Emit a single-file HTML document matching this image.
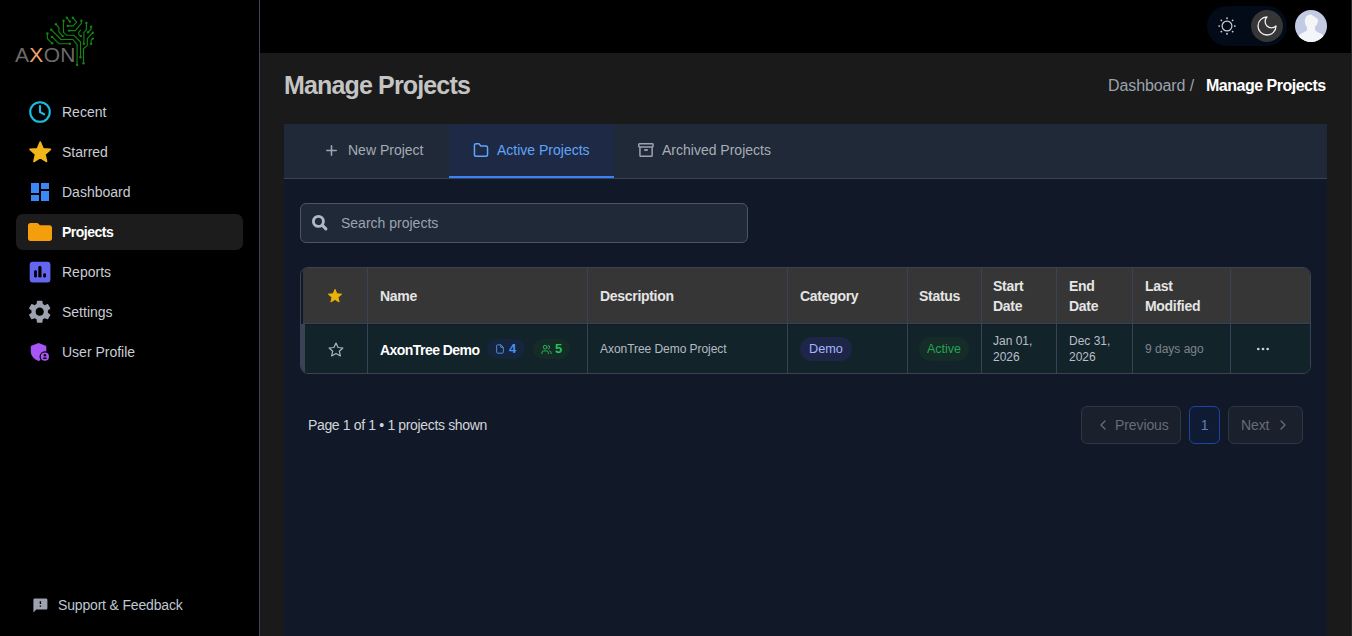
<!DOCTYPE html>
<html><head><meta charset="utf-8">
<style>
*{box-sizing:border-box;margin:0;padding:0}
html,body{width:1352px;height:636px;overflow:hidden;background:#1a1a1a;font-family:"Liberation Sans",sans-serif;}
.abs{position:absolute}
#sidebar{position:absolute;left:0;top:0;width:259px;height:636px;background:#000;}
#vline{position:absolute;left:259px;top:0;width:1px;height:636px;background:#3a4356}
#topbar{position:absolute;left:260px;top:0;width:1091px;height:53px;background:#000}
#hline{position:absolute;left:260px;top:53px;width:1091px;height:1px;background:#3a4356}
.nav{position:absolute;left:16px;width:227px;height:36px;border-radius:7px;}
.nav .lbl{position:absolute;left:46px;top:0;line-height:36px;font-size:14px;color:#c9cdd4;white-space:nowrap}
.nav svg{position:absolute}
#title{position:absolute;left:284px;top:70px;font-size:25px;font-weight:bold;color:#c4c4c4;letter-spacing:-0.85px;white-space:nowrap;line-height:30px}
#crumb{position:absolute;right:25px;top:74px;font-size:16px;line-height:22px;white-space:nowrap}
#card{position:absolute;left:284px;top:124px;width:1043px;height:512px;background:#111827}
#tabs{position:absolute;left:0;top:0;width:1043px;height:55px;background:#1f2937;border-bottom:1px solid #3a4356}
.tab{position:absolute;top:0;height:54px;font-size:14px;line-height:52px;white-space:nowrap;color:#a6abb4}
.vl{top:0;width:1px;height:105px;background:#3a4356}
.th{position:absolute;font-size:14px;line-height:20px;font-weight:bold;color:#e5e5e5;white-space:nowrap;letter-spacing:-0.3px}
.td{font-size:12px;line-height:16px;white-space:nowrap}
.pbtn{height:38px;border:1px solid #2e3544;border-radius:6px;background:#1a202c}
.ptxt{top:291px;font-size:14px;line-height:20px;color:#666d78;white-space:nowrap;letter-spacing:-0.1px}
</style></head>
<body>
<div id="sidebar">
  <!-- logo -->
  <div class="abs" style="left:15px;top:43px;font-size:21px;line-height:24px;color:#6b6b6b;letter-spacing:0.3px;white-space:nowrap">A<span style="color:#f4a36a">X</span>ON</div>
  <svg class="abs" style="left:44px;top:14px" width="54" height="54" viewBox="0 0 54 54" fill="none" stroke="#128512" stroke-width="1.15" stroke-linecap="round" stroke-linejoin="round">
    <path d="M33.1 50.9 V30.6 L28.9 25.5 H17 L7.2 15.7"/>
    <path d="M36.5 43.3 V28 L29.7 21.2 H22.5 L19.5 18.3 V6.8"/>
    <path d="M39.5 49.2 V34.8 L43.3 31.4 V24.6 L48.8 18.7"/>
    <path d="M39.9 29.7 V18.3 L42.4 15.7 V8.9"/>
    <path d="M3.4 19.5 V24.6 L8.1 29.3"/>
    <path d="M8.1 22.9 L14.9 29.7 H25.9"/>
    <path d="M11.9 10.2 L14.9 13.6 V17.8 L18.7 22.1"/>
    <path d="M22.9 3.8 L25.9 7.6"/>
    <path d="M28.9 3.8 L32.7 8.1 L29.3 11.9 H23.8"/>
    <path d="M37.4 6.8 V9.3 L31.4 16.6 H25"/>
    <path d="M36.5 16.1 L34.8 18.3 V20.8 L36.9 22.1"/>
    <path d="M47.1 12.7 V15 L44.1 18.3"/>
    <path d="M48.8 24.6 L47.1 26.3 V29.7"/>
    <g fill="#128512" stroke="none">
      <circle cx="33.1" cy="50.9" r="1.2"/><circle cx="7.2" cy="15.7" r="1.2"/><circle cx="36.5" cy="43.3" r="1.2"/><circle cx="19.5" cy="6.8" r="1.2"/>
      <circle cx="39.5" cy="49.2" r="1.2"/><circle cx="48.8" cy="18.7" r="1.2"/><circle cx="39.9" cy="29.7" r="1.2"/><circle cx="42.4" cy="8.9" r="1.2"/>
      <circle cx="3.4" cy="19.5" r="1.2"/><circle cx="8.1" cy="29.3" r="1.2"/><circle cx="8.1" cy="22.9" r="1.2"/><circle cx="25.9" cy="29.7" r="1.2"/>
      <circle cx="11.9" cy="10.2" r="1.2"/><circle cx="18.7" cy="22.1" r="1.2"/><circle cx="22.9" cy="3.8" r="1.2"/><circle cx="25.9" cy="7.6" r="1.2"/>
      <circle cx="28.9" cy="3.8" r="1.2"/><circle cx="23.8" cy="11.9" r="1.2"/><circle cx="37.4" cy="6.8" r="1.2"/><circle cx="25" cy="16.6" r="1.2"/>
      <circle cx="36.9" cy="22.1" r="1.2"/><circle cx="47.1" cy="12.7" r="1.2"/><circle cx="44.1" cy="18.3" r="1.2"/><circle cx="47.1" cy="29.7" r="1.2"/><circle cx="48.8" cy="24.6" r="1.2"/>
    </g>
  </svg>
  <!-- nav -->
  <div class="nav" style="top:94px">
    <svg style="left:13px;top:7px" width="22" height="22" viewBox="0 0 22 22" fill="none" stroke="#17bde2" stroke-width="2.1" stroke-linecap="round" stroke-linejoin="round"><circle cx="11" cy="11" r="9.8"/><path d="M11 5V11L15.2 13.3"/></svg>
    <div class="lbl">Recent</div>
  </div>
  <div class="nav" style="top:134px">
    <svg style="left:11.75px;top:6.1px" width="24.5" height="24.5" viewBox="0 0 24 24"><path fill="#f2b51a" stroke="#f2b51a" stroke-width="1.6" stroke-linejoin="round" d="M12 17.27L18.18 21l-1.64-7.03L22 9.24l-7.19-.61L12 2 9.19 8.63 2 9.24l5.46 4.73L5.82 21z"/></svg>
    <div class="lbl">Starred</div>
  </div>
  <div class="nav" style="top:174px">
    <svg style="left:15px;top:9px" width="18" height="18" viewBox="0 0 18 18" fill="#3b87f5"><rect x="0" y="0" width="8" height="10"/><rect x="0" y="12" width="8" height="6"/><rect x="10" y="0" width="8" height="6"/><rect x="10" y="8" width="8" height="10"/></svg>
    <div class="lbl">Dashboard</div>
  </div>
  <div class="nav" style="top:214px;background:#1c1c1c">
    <svg style="left:12px;top:9px" width="24" height="18" viewBox="2 4 20 16" preserveAspectRatio="none"><path fill="#f59e0b" d="M10 4H4c-1.1 0-2 .9-2 2v12c0 1.1.9 2 2 2h16c1.1 0 2-.9 2-2V8c0-1.1-.9-2-2-2h-8l-2-2z"/></svg>
    <div class="lbl" style="color:#fff;font-weight:bold;letter-spacing:-0.5px">Projects</div>
  </div>
  <div class="nav" style="top:254px">
    <svg style="left:13px;top:7px" width="22" height="22" viewBox="0 0 22 22"><rect x="0.7" y="0.7" width="20.7" height="20.7" rx="3" fill="#6466f0"/><g fill="#000"><rect x="5.1" y="9.3" width="2.8" height="7.3" rx="1.3"/><rect x="9.3" y="5.1" width="3.2" height="11.5" rx="1.4"/><rect x="14.2" y="12.2" width="2.8" height="4.4" rx="1.3"/></g></svg>
    <div class="lbl">Reports</div>
  </div>
  <div class="nav" style="top:294px">
    <svg style="left:9.9px;top:3.9px" width="27.4" height="27.4" viewBox="0 0 24 24"><path fill="#9ca3af" d="M19.14 12.94c.04-.3.06-.61.06-.94 0-.32-.02-.64-.07-.94l2.03-1.58c.18-.14.23-.41.12-.61l-1.92-3.32c-.12-.22-.37-.29-.59-.22l-2.39.96c-.5-.38-1.03-.7-1.62-.94l-.36-2.54c-.04-.24-.24-.41-.48-.41h-3.84c-.24 0-.43.17-.47.41l-.36 2.54c-.59.24-1.13.57-1.62.94l-2.39-.96c-.22-.08-.47 0-.59.22L2.74 8.87c-.12.21-.08.47.12.61l2.03 1.58c-.05.3-.09.63-.09.94s.02.64.07.94l-2.03 1.58c-.18.14-.23.41-.12.61l1.92 3.32c.12.22.37.29.59.22l2.39-.96c.5.38 1.030.7 1.620.94l.36 2.54c.05.24.24.41.48.41h3.84c.24 0 .44-.17.47-.41l.36-2.54c.59-.24 1.13-.56 1.62-.94l2.39.96c.22.08.47 0 .59-.22l1.92-3.32c.12-.22.07-.47-.12-.61l-2.01-1.58zM12 15.6c-1.98 0-3.6-1.62-3.6-3.6s1.62-3.6 3.6-3.6 3.6 1.62 3.6 3.6-1.62 3.6-3.6 3.6z"/></svg>
    <div class="lbl">Settings</div>
  </div>
  <div class="nav" style="top:334px">
    <svg style="left:13px;top:7px" width="22" height="22" viewBox="0 0 22 22"><path fill="#a855f7" d="M9.6 2.1L17.3 5V10.5C17.3 15 14 18.5 9.6 19.9C5.2 18.5 1.8 15 1.8 10.5V5Z"/><circle cx="15.9" cy="15.7" r="5.4" fill="#000"/><circle cx="15.9" cy="15.7" r="4.1" fill="#a855f7"/><circle cx="15.9" cy="14.3" r="1.25" fill="#000"/><rect x="14.1" y="16.6" width="3.6" height="1.3" rx=".6" fill="#000"/></svg>
    <div class="lbl">User Profile</div>
  </div>
  <!-- support -->
  <svg class="abs" style="left:31.9px;top:597.4px" width="16.8" height="16.8" viewBox="0 0 24 24"><path fill="#9ca3af" d="M20 2H4c-1.1 0-1.99.9-1.99 2L2 22l4-4h14c1.1 0 2-.9 2-2V4c0-1.1-.9-2-2-2zm-7 12h-2v-2h2v2zm0-4h-2V6h2v4z"/></svg>
  <div class="abs" style="left:58px;top:595px;font-size:14px;line-height:20px;color:#bfc7d2;white-space:nowrap;letter-spacing:-0.17px">Support &amp; Feedback</div>
</div>

<div id="vline"></div>
<div id="topbar">
  <div class="abs" style="left:947px;top:6px;width:80px;height:40px;border-radius:20px;background:#020b17"></div>
  <svg class="abs" style="left:955px;top:14px" width="24" height="24" viewBox="0 0 24 24" fill="none" stroke="#c9cdd6" stroke-width="1.2" stroke-linecap="round"><circle cx="12" cy="12" r="4.9"/><g stroke-width="1.7"><path d="M12 4.1v.2M12 19.7v.2M4.1 12h.2M19.7 12h.2M6.3 6.3l.1.1M17.6 17.6l.1.1M6.3 17.7l.1-.1M17.6 6.4l.1-.1"/></g></svg>
  <div class="abs" style="left:991px;top:10px;width:32px;height:32px;border-radius:16px;background:#363636"></div>
  <svg class="abs" style="left:995px;top:13.5px" width="24" height="24" viewBox="0 0 24 24" fill="none" stroke="#f2f2f2" stroke-width="1.3" stroke-linejoin="round"><path d="M12 3a6 6 0 0 0 9 9 9 9 0 1 1-9-9Z"/></svg>
  <div class="abs" style="left:1035px;top:10px;width:32px;height:32px;border-radius:16px;background:#c3cbe4;overflow:hidden">
    <svg width="32" height="32" viewBox="0 0 32 32"><path fill="#f4f5f8" d="M16 4.5C12.3 4.5 9.8 7 9.8 11.5c0 2.3.8 4.2 2.2 5.5v3c-.5 1.5-4 2.5-6.5 4C3.5 25.2 2.5 27 2 33h28c-.5-6-1.5-7.8-3.5-9-2.5-1.5-6-2.5-6.5-4v-3c1-1.5 1.4-1.3 2.2-3.2 2.2-5.5 0-4.5-2.5-7-6.2-7z"/></svg>
  </div>
</div>
<div id="title">Manage Projects</div>
<div class="abs" style="left:1108px;top:75px;font-size:16px;line-height:22px;color:#9ca3af;white-space:nowrap;letter-spacing:-0.1px">Dashboard /</div><div class="abs" style="left:1206px;top:75px;font-size:16px;line-height:22px;color:#fff;font-weight:bold;white-space:nowrap;letter-spacing:-0.5px">Manage Projects</div>
<div id="card">
  <div id="tabs">
    <svg class="abs" style="left:42px;top:20.5px" width="11" height="11" viewBox="0 0 11 11" stroke="#9ea4ae" stroke-width="1.6" stroke-linecap="round"><path d="M5.5 .8v9.4M.8 5.5h9.4"/></svg>
    <div class="tab" style="left:64px">New Project</div>
    <div class="abs" style="left:165px;top:0;width:165px;height:54px;background:#1e2a45;border-bottom:2px solid #3b82f6"></div>
    <svg class="abs" style="left:189px;top:18px" width="17" height="17" viewBox="0 0 17 17" fill="none" stroke="#60a5fa" stroke-width="1.5" stroke-linejoin="round"><path d="M1.45 3.3Q1.45 1.75 3 1.75H5.6Q6.2 1.75 6.6 2.3L7.4 3.6Q7.7 4.1 8.3 4.1H13Q14.55 4.1 14.55 5.65V12.7Q14.55 14.25 13 14.25H3Q1.45 14.25 1.45 12.7Z"/></svg>
    <div class="tab" style="left:213px;color:#60a5fa">Active Projects</div>
    <svg class="abs" style="left:353px;top:18px" width="18" height="17" viewBox="0 0 18 17" fill="none" stroke="#9ca3af" stroke-width="1.5" stroke-linejoin="round"><rect x="1.75" y="1.75" width="14.3" height="3.2" rx=".7"/><path d="M2.95 4.95V13.45Q2.95 14.25 3.75 14.25H14.35Q15.15 14.25 15.15 13.45V4.95"/><path d="M7.2 8H10.8" stroke-width="1.8"/></svg>
    <div class="tab" style="left:378px;color:#a8adb6">Archived Projects</div>
  </div>
  <!-- search -->
  <div class="abs" style="left:16px;top:79px;width:448px;height:40px;border:1px solid #4b5563;border-radius:6px;background:#1f2937"></div>
  <svg class="abs" style="left:25px;top:88px" width="22" height="22" viewBox="0 0 22 22" fill="none" stroke="#b3b9c2"><circle cx="9.4" cy="9.4" r="5" stroke-width="2.8"/><path d="M13.2 13.2L16.9 16.9" stroke-width="3.1" stroke-linecap="round"/></svg>
  <div class="abs" style="left:57px;top:89px;font-size:14px;line-height:20px;color:#9ca3af;white-space:nowrap">Search projects</div>
  <!-- table -->
  <div id="tbl" class="abs" style="left:16px;top:143px;width:1011px;height:107px;border:1px solid #3a4356;border-radius:8px;background:#111827;overflow:hidden">
    <div class="abs" style="left:2px;top:0;width:1007px;height:56px;background:#363636;border-bottom:1px solid #3a4356"></div>
    <div class="abs" style="left:0;top:56px;width:4px;height:49px;background:#3a4356"></div>
    <div class="abs" style="left:4px;top:57px;width:1005px;height:48px;background:#13232a"></div>
    <!-- col lines: abs x - 301 -->
    <div class="abs vl" style="left:66px"></div>
    <div class="abs vl" style="left:286px"></div>
    <div class="abs vl" style="left:486px"></div>
    <div class="abs vl" style="left:606px"></div>
    <div class="abs vl" style="left:680px"></div>
    <div class="abs vl" style="left:755px"></div>
    <div class="abs vl" style="left:831px"></div>
    <div class="abs vl" style="left:929px"></div>
    <!-- header -->
    <svg class="abs" style="left:26px;top:20px" width="16" height="16" viewBox="0 0 24 24"><path fill="#eab308" stroke="#eab308" stroke-width="1.4" stroke-linejoin="round" d="M12 17.27L18.18 21l-1.64-7.03L22 9.24l-7.19-.61L12 2 9.19 8.63 2 9.24l5.46 4.73L5.82 21z"/></svg>
    <div class="th" style="left:79px;top:18px">Name</div>
    <div class="th" style="left:299px;top:18px">Description</div>
    <div class="th" style="left:499px;top:18px">Category</div>
    <div class="th" style="left:618px;top:18px">Status</div>
    <div class="th" style="left:692px;top:8px">Start<br>Date</div>
    <div class="th" style="left:768px;top:8px">End<br>Date</div>
    <div class="th" style="left:844px;top:8px">Last<br>Modified</div>
    <!-- row -->
    <svg class="abs" style="left:26px;top:73px" width="18" height="18" viewBox="0 0 24 24" fill="none" stroke="#b0b5bd" stroke-width="1.6" stroke-linejoin="round"><path d="M12 2.8l2.8 5.9 6.4.6-4.8 4.3 1.4 6.3L12 16.6l-5.8 3.3 1.4-6.3-4.8-4.3 6.4-.6z"/></svg>
    <div class="abs" style="left:79px;top:72px;font-size:14px;line-height:20px;font-weight:bold;color:#fff;white-space:nowrap;letter-spacing:-0.55px">AxonTree Demo</div>
    <div class="abs" style="left:186px;top:71px;width:38px;height:20px;border-radius:10px;background:#14253d"></div>
    <svg class="abs" style="left:194px;top:75.8px" width="10" height="10" viewBox="0 0 24 24" fill="none" stroke="#5590dc" stroke-width="2.3" stroke-linejoin="round"><path d="M14 2H6a2 2 0 0 0-2 2v16a2 2 0 0 0 2 2h12a2 2 0 0 0 2-2V8z"/><path d="M14 2v6h6"/></svg>
    <div class="abs" style="left:208px;top:72px;font-size:13px;line-height:18px;font-weight:bold;color:#4b8ff2">4</div>
    <div class="abs" style="left:232px;top:71px;width:37px;height:20px;border-radius:10px;background:#142c25"></div>
    <svg class="abs" style="left:239.5px;top:75.7px" width="11" height="11" viewBox="0 0 24 24" fill="none" stroke="#2fb866" stroke-width="2.1" stroke-linecap="round" stroke-linejoin="round"><path d="M16 21v-2a4 4 0 0 0-4-4H6a4 4 0 0 0-4 4v2"/><circle cx="9" cy="7" r="4"/><path d="M22 21v-2a4 4 0 0 0-3-3.87M16 3.13a4 4 0 0 1 0 7.75"/></svg>
    <div class="abs" style="left:254px;top:72px;font-size:13px;line-height:18px;font-weight:bold;color:#22c55e">5</div>
    <div class="abs td" style="left:299px;top:73px;color:#b5bbc4;letter-spacing:-0.05px">AxonTree Demo Project</div>
    <div class="abs" style="left:499px;top:69px;width:52px;height:24px;border-radius:12px;background:#1e2648"></div>
    <div class="abs td" style="left:499px;top:73px;width:52px;text-align:center;color:#a5b4fc;font-size:12.7px">Demo</div>
    <div class="abs" style="left:618px;top:69px;width:50px;height:24px;border-radius:12px;background:#152c29"></div>
    <div class="abs td" style="left:618px;top:73px;width:50px;text-align:center;color:#23a550;font-size:12.5px">Active</div>
    <div class="abs td" style="left:692px;top:65px;line-height:16px;color:#b9bfc8">Jan 01,<br>2026</div>
    <div class="abs td" style="left:768px;top:65px;line-height:16px;color:#b9bfc8">Dec 31,<br>2026</div>
    <div class="abs td" style="left:844px;top:73px;color:#7d838e">9 days ago</div>
    <svg class="abs" style="left:955px;top:79px" width="14" height="4" viewBox="0 0 14 4" fill="#cdd1d8"><circle cx="2.3" cy="2" r="1.35"/><circle cx="7" cy="2" r="1.35"/><circle cx="11.7" cy="2" r="1.35"/></svg>
  </div>
  <!-- pagination -->
  <div class="abs" style="left:24px;top:291px;font-size:14px;line-height:20px;color:#d1d5db;white-space:nowrap;letter-spacing:-0.35px">Page 1 of 1 • 1 projects shown</div>
  <div class="abs pbtn" style="left:797px;top:282px;width:100px"></div>
  <svg class="abs" style="left:813px;top:295px" width="12" height="12" viewBox="0 0 12 12" fill="none" stroke="#666d78" stroke-width="1.3" stroke-linecap="round" stroke-linejoin="round"><path d="M8 2L4 6l4 4"/></svg>
  <div class="abs ptxt" style="left:831px">Previous</div>
  <div class="abs" style="left:905px;top:282px;width:31px;height:38px;border:1px solid #1f43a3;border-radius:6px;background:#0f1a33"></div>
  <div class="abs ptxt" style="left:905px;width:31px;text-align:center;color:#5d7db8">1</div>
  <div class="abs pbtn" style="left:944px;top:282px;width:75px"></div>
  <div class="abs ptxt" style="left:957px">Next</div>
  <svg class="abs" style="left:993px;top:295px" width="12" height="12" viewBox="0 0 12 12" fill="none" stroke="#666d78" stroke-width="1.3" stroke-linecap="round" stroke-linejoin="round"><path d="M4 2l4 4-4 4"/></svg>
</div>
<div class="abs" style="left:1351px;top:0;width:1px;height:636px;background:#292929"></div>
</body></html>
